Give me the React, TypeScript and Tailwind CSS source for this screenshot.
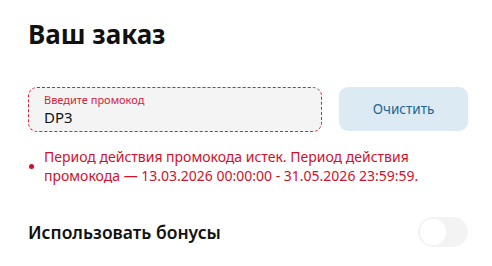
import React, { useState } from 'react';

const App: React.FC = () => {
    const [code, setCode] = useState('DP3');
    const [useBonus, setUseBonus] = useState(false);

    return (
        <div className="w-[492px] h-[266px] bg-white pl-7 pr-6 pt-[18px] font-['Noto_Sans',sans-serif] overflow-hidden">
            <h1 className="text-[26px] leading-[32px] font-bold text-[#111]">Ваш заказ</h1>

            <div className="mt-[37px] flex gap-[17px]">
                <div className="w-[294px] h-[45px] rounded-[9px] border border-dashed border-[#d0243d] bg-[#f4f4f4] px-[15px] pt-[4px]">
                    <div className="text-[11px] leading-[15px] text-[#d0243d]">Введите промокод</div>
                    <input
                        value={code}
                        onChange={(e) => setCode(e.target.value)}
                        className="block w-full bg-transparent text-[15px] leading-[20px] text-[#111] outline-none"
                    />
                </div>
                <button
                    type="button"
                    onClick={() => setCode('')}
                    className="w-[129px] h-[44px] rounded-[9px] bg-[#dcebf3] text-[13.5px] text-[#1c6597]"
                >
                    Очистить
                </button>
            </div>

            <div className="mt-[15px] flex items-center gap-[10px] pl-[1px]">
                <span className="w-[5px] h-[5px] rounded-full bg-[#d0112b] shrink-0"></span>
                <p className="text-[14px] leading-[19px] text-[#d0112b] w-[400px]">
                    Период действия промокода истек. Период действия промокода — 13.03.2026 00:00:00 - 31.05.2026 23:59:59.
                </p>
            </div>

            <div className="mt-[32px] flex items-center justify-between">
                <span className="text-[17.5px] font-semibold text-[#111]">Использовать бонусы</span>
                <button
                    type="button"
                    onClick={() => setUseBonus(!useBonus)}
                    className={`w-[50px] h-[30px] rounded-full p-[2px] flex ${useBonus ? 'bg-[#1c6597] justify-end' : 'bg-[#f3f3f3] justify-start'}`}
                >
                    <span className="w-[26px] h-[26px] rounded-full bg-white"></span>
                </button>
            </div>
        </div>
    );
};

export default App;
